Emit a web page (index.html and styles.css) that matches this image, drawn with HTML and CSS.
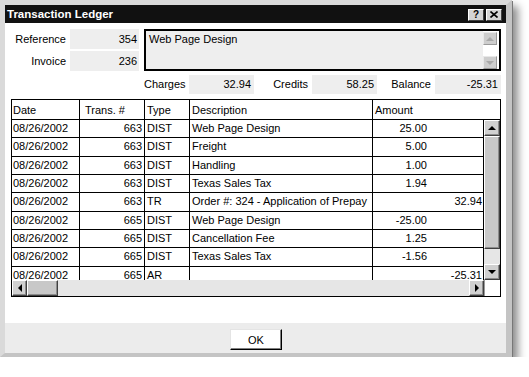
FILE: index.html
```html
<!DOCTYPE html>
<html>
  <head>
    <title>Transaction Ledger</title>
    <link rel="stylesheet" href="styles.css">
  </head>
  <body>
    <div class="window">
      <div class="titlebar">
        <span class="title">Transaction Ledger</span>
        <div class="caption-buttons">
          <span class="cap-btn">?</span>
          <span class="cap-btn">
            <svg width="8" height="7" viewBox="0 0 8 7"><path d="M0.5 0.5 L7.5 6.5 M7.5 0.5 L0.5 6.5" stroke="#000" stroke-width="1.6" fill="none"/></svg>
          </span>
        </div>
      </div>

      <div class="client">
        <div class="top">
          <div class="ids">
            <div class="field-row"><span class="lbl">Reference</span><div class="field">354</div></div>
            <div class="field-row"><span class="lbl">Invoice</span><div class="field">236</div></div>
          </div>
          <div class="memo">
            <div class="memo-text">Web Page Design</div>
            <div class="memo-scroll">
              <span class="sb-btn off up"></span>
              <span class="sb-btn off down"></span>
            </div>
          </div>
        </div>

        <div class="totals">
          <span class="lbl w41">Charges</span><div class="field w65">32.94</div>
          <span class="lbl w54">Credits</span><div class="field w65">58.25</div>
          <span class="lbl w54">Balance</span><div class="field w66">-25.31</div>
        </div>

        <div class="grid">
          <div class="grid-head">
            <div class="c date">Date</div>
            <div class="c trans head-trans">Trans. #</div>
            <div class="c type">Type</div>
            <div class="c desc">Description</div>
            <div class="c amt-head">Amount</div>
          </div>
          <div class="grid-body">
            <div class="rows">
              <div class="row"><div class="c date">08/26/2002</div><div class="c trans">663</div><div class="c type">DIST</div><div class="c desc">Web Page Design</div><div class="c amt dr">25.00</div></div>
              <div class="row"><div class="c date">08/26/2002</div><div class="c trans">663</div><div class="c type">DIST</div><div class="c desc">Freight</div><div class="c amt dr">5.00</div></div>
              <div class="row"><div class="c date">08/26/2002</div><div class="c trans">663</div><div class="c type">DIST</div><div class="c desc">Handling</div><div class="c amt dr">1.00</div></div>
              <div class="row"><div class="c date">08/26/2002</div><div class="c trans">663</div><div class="c type">DIST</div><div class="c desc">Texas Sales Tax</div><div class="c amt dr">1.94</div></div>
              <div class="row"><div class="c date">08/26/2002</div><div class="c trans">663</div><div class="c type">TR</div><div class="c desc">Order #: 324 - Application of Prepay</div><div class="c amt cr">32.94</div></div>
              <div class="row"><div class="c date">08/26/2002</div><div class="c trans">665</div><div class="c type">DIST</div><div class="c desc">Web Page Design</div><div class="c amt dr">-25.00</div></div>
              <div class="row"><div class="c date">08/26/2002</div><div class="c trans">665</div><div class="c type">DIST</div><div class="c desc">Cancellation Fee</div><div class="c amt dr">1.25</div></div>
              <div class="row"><div class="c date">08/26/2002</div><div class="c trans">665</div><div class="c type">DIST</div><div class="c desc">Texas Sales Tax</div><div class="c amt dr">-1.56</div></div>
              <div class="row"><div class="c date">08/26/2002</div><div class="c trans">665</div><div class="c type">AR</div><div class="c desc"></div><div class="c amt cr">-25.31</div></div>
            </div>
            <div class="vscroll">
              <span class="sb-btn up"></span>
              <span class="sb-thumb v"></span>
              <span class="sb-track"></span>
              <span class="sb-btn down"></span>
            </div>
          </div>
          <div class="hscroll">
            <span class="sb-btn left"></span>
            <span class="sb-thumb h"></span>
            <span class="sb-track"></span>
            <span class="sb-btn right"></span>
            <span class="corner"></span>
          </div>
        </div>
      </div>

      <div class="footer">
        <button class="ok">OK</button>
      </div>
    </div>
  </body>
</html>
```

FILE: styles.css
```css
body {
  margin: 0;
  background: #fff;
  font-family: "Liberation Sans", Arial, sans-serif;
  font-size: 11px;
  color: #000;
}

.window {
  width: 512px;
  height: 357px;
  box-sizing: border-box;
  border: 5px solid #d6d6d6;
  border-right-width: 6px;
  border-bottom-width: 4px;
  border-color: #dadada #c4c4c4 #c4c4c4 #dadada;
  background: #fff;
  box-shadow: 1px 1px 0 #777, 6px 6px 8px rgba(0, 0, 0, 0.45);
  display: flex;
  flex-direction: column;
}

/* title bar */
.titlebar {
  height: 18px;
  background: #111;
  color: #fff;
  display: flex;
  align-items: center;
  justify-content: space-between;
  padding: 0 4px 0 2px;
}
.title {
  font-weight: bold;
  font-size: 11.5px;
}
.caption-buttons {
  display: flex;
  gap: 2px;
  padding-top: 1px;
}
.cap-btn {
  width: 16px;
  height: 12px;
  box-sizing: border-box;
  background: #d4d4d4;
  border: 1px solid;
  border-color: #fff #404040 #404040 #fff;
  display: flex;
  align-items: center;
  justify-content: center;
  color: #000;
  font-weight: bold;
  font-size: 10px;
  line-height: 10px;
}

/* client area */
.client {
  flex: 1;
  padding: 6px 5px 0 6px;
}
.top {
  display: flex;
  gap: 5px;
  height: 42px;
}
.ids {
  width: 128px;
  display: flex;
  flex-direction: column;
  gap: 2px;
}
.field-row {
  display: flex;
  gap: 4px;
  height: 20px;
}
.lbl {
  text-align: right;
  line-height: 20px;
}
.field-row .lbl {
  width: 55px;
}
.field {
  width: 69px;
  height: 20px;
  box-sizing: border-box;
  background: #eee;
  text-align: right;
  padding-right: 2px;
  line-height: 20px;
}

.memo {
  flex: 1;
  box-sizing: border-box;
  border: 2px solid #000;
  background: #eee;
  display: flex;
}
.memo-text {
  flex: 1;
  padding: 2px 3px;
  line-height: 13px;
}
.memo-scroll {
  width: 15px;
  background: #fff;
  display: flex;
  flex-direction: column;
  justify-content: space-between;
  padding: 1px 1px 0 0;
}
.memo-scroll .sb-btn {
  width: 14px;
  height: 13px;
  flex: none;
}

.totals {
  display: flex;
  margin: 4px 0 0 133px;
  height: 19px;
}
.totals .lbl {
  line-height: 19px;
  margin-right: 4px;
}
.totals .field {
  height: 19px;
  line-height: 19px;
  padding-right: 3px;
}
.w41 { width: 41px; }
.w54 { width: 54px; }
.totals .w65 { width: 65px; }
.totals .w66 { width: 66px; }

/* grid */
.grid {
  margin-top: 5px;
  width: 490px;
  height: 198px;
  box-sizing: border-box;
  border: 1px solid #000;
  display: flex;
  flex-direction: column;
}
.grid-head {
  display: flex;
  height: 20px;
  box-sizing: border-box;
  border-bottom: 1px solid #000;
}
.grid-head .c {
  padding-top: 2px;
}
.c {
  box-sizing: border-box;
  border-right: 1px solid #000;
  padding: 0 2px;
  white-space: nowrap;
  overflow: hidden;
  line-height: 17px;
}
.date { width: 68px; padding-left: 1px; }
.trans { width: 65px; text-align: right; }
.head-trans { text-align: left; padding-left: 5px; }
.type { width: 45px; }
.desc { width: 183px; }
.amt-head { flex: 1; border-right: none; }
.amt { flex: 1; border-right: none; text-align: right; }
.dr { padding-right: 56px; }
.cr { padding-right: 1px; }

.grid-body {
  display: flex;
  height: 160px;
}
.rows {
  width: 472px;
  box-sizing: border-box;
  border-right: 1px solid #000;
  overflow: hidden;
}
.row {
  display: flex;
  height: 18.333px;
  flex: none;
  box-sizing: border-box;
  border-bottom: 1px solid #000;
}

/* scrollbars */
.vscroll {
  width: 16px;
  display: flex;
  flex-direction: column;
  background: #e6e6e6;
}
.sb-btn,
.sb-thumb {
  box-sizing: border-box;
  background: #d0d0d0;
  border: 1px solid;
  border-color: #fff #404040 #404040 #fff;
  box-shadow: inset -1px -1px #8c8c8c;
  display: flex;
  align-items: center;
  justify-content: center;
  flex: none;
}
.vscroll .sb-btn { height: 16px; }
.sb-thumb.v { height: 113px; background: #c8c8c8; }
.sb-track {
  flex: 1;
  background: #e6e6e6;
}
.sb-btn::after {
  content: "";
  width: 0;
  height: 0;
}
.sb-btn.up::after {
  border-left: 4px solid transparent;
  border-right: 4px solid transparent;
  border-bottom: 4px solid #000;
}
.sb-btn.down::after {
  border-left: 4px solid transparent;
  border-right: 4px solid transparent;
  border-top: 4px solid #000;
}
.sb-btn.left::after {
  border-top: 4px solid transparent;
  border-bottom: 4px solid transparent;
  border-right: 4px solid #000;
}
.sb-btn.right::after {
  border-top: 4px solid transparent;
  border-bottom: 4px solid transparent;
  border-left: 4px solid #000;
}
.sb-btn.off {
  background: #cdcdcd;
  box-shadow: none;
  border-color: #e8e8e8 #9a9a9a #9a9a9a #e8e8e8;
}
.sb-btn.off.up::after { border-bottom-color: #a8a8a8; }
.sb-btn.off.down::after { border-top-color: #a8a8a8; }

.hscroll {
  height: 16px;
  display: flex;
  background: #e6e6e6;
}
.hscroll .sb-btn { width: 15px; }
.sb-thumb.h { width: 31px; background: #c8c8c8; }
.corner {
  width: 16px;
  background: #fff;
  border-left: 1px solid #9a9a9a;
  box-sizing: border-box;
}

/* footer */
.footer {
  height: 30px;
  box-sizing: border-box;
  background: #ececec;
  display: flex;
  justify-content: center;
  padding-top: 6px;
}
.ok {
  width: 52px;
  height: 21px;
  padding: 0;
  background: #fff;
  border: 1px solid;
  border-color: #e4e4e4 #000 #000 #e4e4e4;
  box-shadow: inset -1px -1px #808080;
  font-family: "Liberation Sans", Arial, sans-serif;
  font-size: 11px;
  color: #000;
  margin-left: 1px;
}
```
